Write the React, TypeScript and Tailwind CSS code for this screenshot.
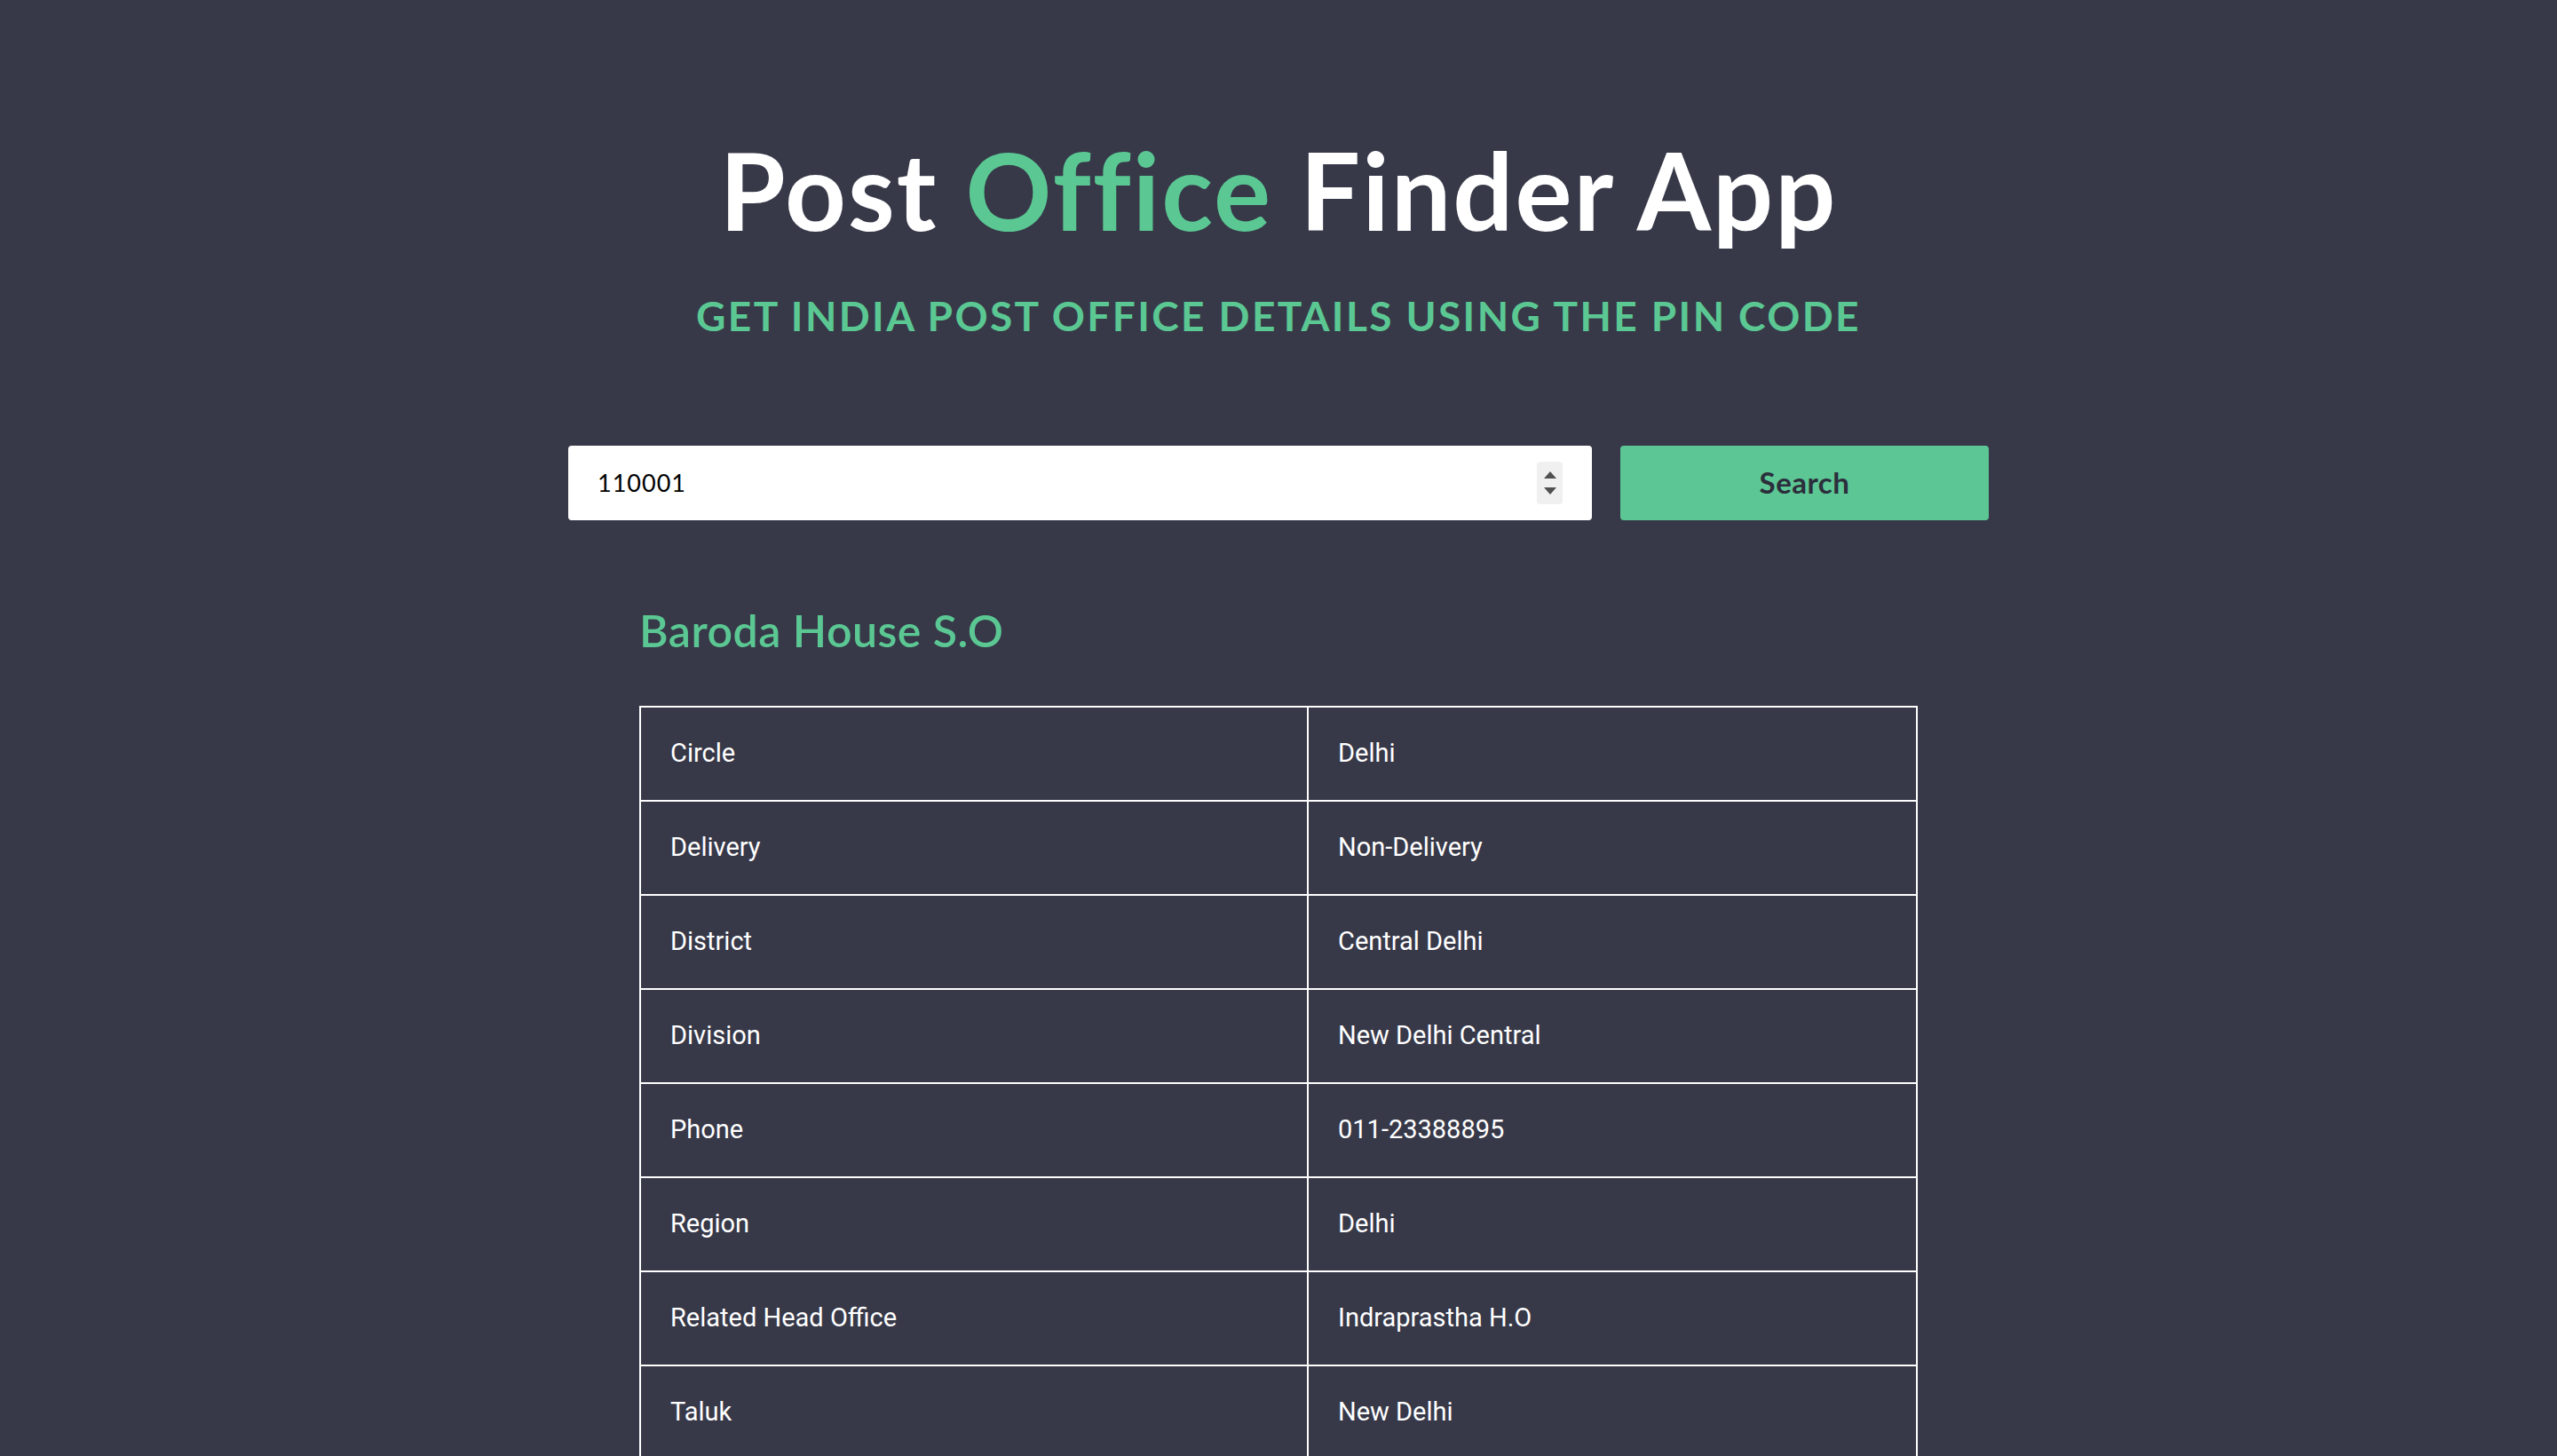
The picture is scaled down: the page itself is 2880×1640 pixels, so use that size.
import { useState } from 'react';

const ROWS: [string, string][] = [
  ['Circle', 'Delhi'],
  ['Delivery', 'Non-Delivery'],
  ['District', 'Central Delhi'],
  ['Division', 'New Delhi Central'],
  ['Phone', '011-23388895'],
  ['Region', 'Delhi'],
  ['Related Head Office', 'Indraprastha H.O'],
  ['Taluk', 'New Delhi'],
];

export default function App() {
  const [pin, setPin] = useState('110001');

  return (
    <div className="min-h-screen bg-[#373949] text-white font-['Lato','Noto_Sans',sans-serif]">
      <div className="mx-auto w-[1600px] pt-[154px] pb-10">
        <h1 className="text-center text-[120px] leading-none font-bold tracking-[2px]">
          Post <span className="text-[#5bc893]">Office</span> Finder App
        </h1>
        <p className="mt-[59px] text-center text-[46px] leading-none font-bold uppercase text-[#5bc893] tracking-[2.4px]">
          Get India Post Office Details Using The Pin Code
        </p>

        {/* Search bar */}
        <div className="mt-[123px] flex gap-8">
          <div className="flex flex-1 items-center h-[84px] bg-white rounded pl-[33px] pr-[33px]">
            <input
              value={pin}
              onChange={e => setPin(e.target.value)}
              className="flex-1 bg-transparent outline-none text-[27px] tracking-[1px] text-black font-['Lato',sans-serif]"
            />
            <div className="flex flex-col items-center justify-center gap-[10px] w-[29px] h-[48px] bg-[#f0f0f0] rounded-sm">
              <div className="w-0 h-0 border-x-[7px] border-x-transparent border-b-[8px] border-b-[#505050]" />
              <div className="w-0 h-0 border-x-[7px] border-x-transparent border-t-[8px] border-t-[#505050]" />
            </div>
          </div>
          <button className="w-[415px] h-[84px] rounded bg-[#5cc794] text-[33px] tracking-[0.5px] font-bold text-[#2c2e3c]">
            Search
          </button>
        </div>

        {/* Result */}
        <div className="mx-auto w-[1440px] mt-[99px]">
          <h2 className="text-[50px] leading-none font-semibold tracking-[0.5px] text-[#5bc893]">Baroda House S.O</h2>
          <table className="mt-[60px] w-full border-collapse font-['Roboto',sans-serif] text-[29px]">
            <tbody>
              {ROWS.map(([k, v]) => (
                <tr key={k} className="h-[106px]">
                  <td className="w-[752px] border-2 border-white px-[33px]">{k}</td>
                  <td className="border-2 border-white px-[33px]">{v}</td>
                </tr>
              ))}
            </tbody>
          </table>
        </div>
      </div>
    </div>
  );
}
